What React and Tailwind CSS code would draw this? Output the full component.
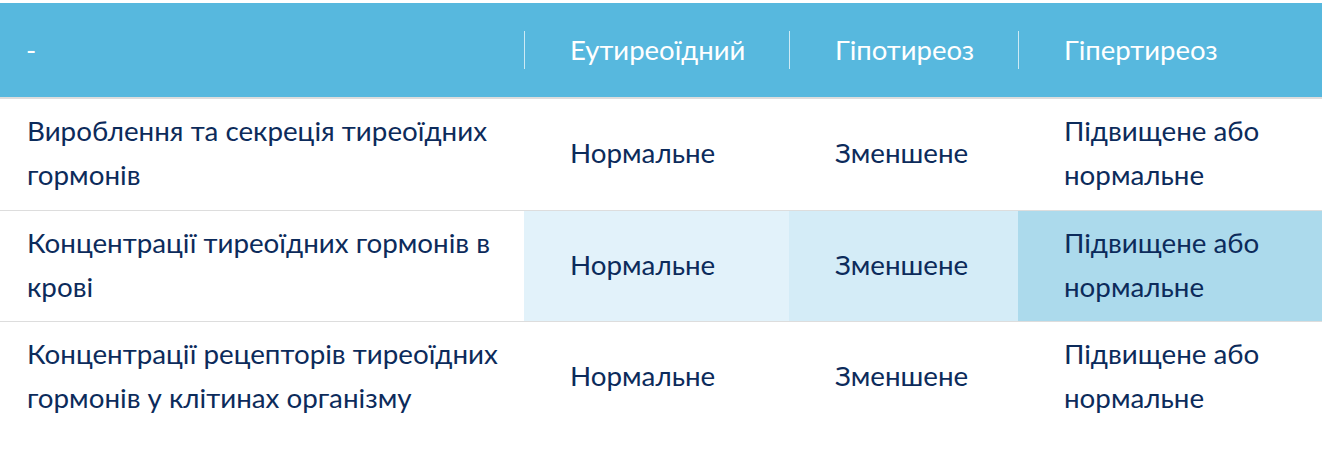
const rows = [
  {
    label: 'Вироблення та секреція тиреоїдних гормонів',
    values: ['Нормальне', 'Зменшене', 'Підвищене або нормальне'],
    highlight: false,
    h: 'h-[112px] border-b border-[#dddddd]',
  },
  {
    label: 'Концентрації тиреоїдних гормонів в крові',
    values: ['Нормальне', 'Зменшене', 'Підвищене або нормальне'],
    highlight: true,
    h: 'h-[111px] border-b border-[#dddddd]',
  },
  {
    label: 'Концентрації рецепторів тиреоїдних гормонів у клітинах організму',
    values: ['Нормальне', 'Зменшене', 'Підвищене або нормальне'],
    highlight: false,
    h: 'h-[111px]',
  },
];

const headers = ['Еутиреоїдний', 'Гіпотиреоз', 'Гіпертиреоз'];
const tints = ['bg-[#e2f2fa]', 'bg-[#d4ecf7]', 'bg-[#acdaec]'];

export default function App() {
  return (
    <div className="min-h-[455px] bg-white pt-[3px] font-['Lato','Noto_Sans',sans-serif] text-[27.75px]">
      <div className="grid grid-cols-[524px_265px_229px_1fr] bg-[#57b8de] border-b-2 border-[#dddddd] h-[96px] text-white text-[27.5px]">
        <div className="flex items-center pl-[26px]">-</div>
        {headers.map((h) => (
          <div key={h} className="flex items-center">
            <span className="w-px h-[38px] bg-white/70" />
            <span className="pl-[45px]">{h}</span>
          </div>
        ))}
      </div>
      {rows.map((row, i) => (
        <div
          key={i}
          className={`grid grid-cols-[524px_265px_229px_1fr] text-[#0c2b5b] leading-[44px] ${row.h}`}
        >
          <div className="flex items-center pl-[27px] pr-[20px] pb-[3px]">{row.label}</div>
          {row.values.map((v, j) => (
            <div
              key={j}
              className={`flex items-center pl-[46px] pr-[20px] pb-[3px] ${row.highlight ? tints[j] : ''}`}
            >
              {v}
            </div>
          ))}
        </div>
      ))}
    </div>
  );
}
